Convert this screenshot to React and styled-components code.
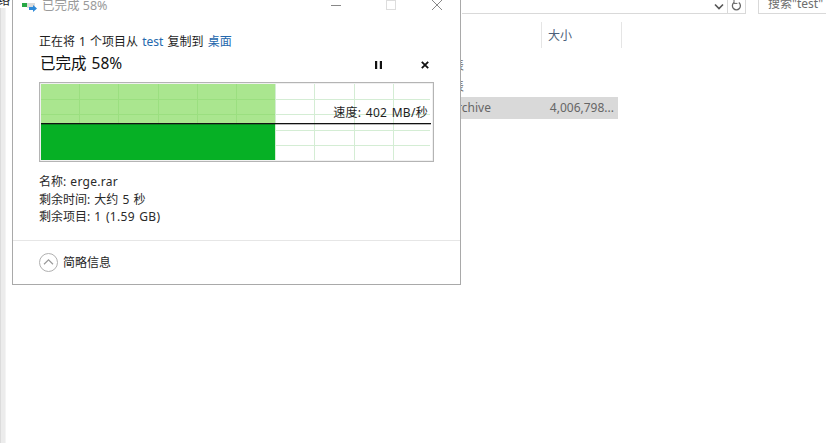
import React from "react";
import styled, { createGlobalStyle } from "styled-components";

const Global = createGlobalStyle`
  html, body { margin: 0; padding: 0; background: #fff; width: 826px; height: 443px; overflow: hidden; }
  body { font-family: "Noto Sans", "Noto Sans CJK SC", sans-serif; font-size: 12px; color: #1e1e1e; word-spacing: 1px; }
`;

const Page = styled.div`
  position: relative;
  width: 826px;
  height: 443px;
  overflow: hidden;
  display: flex;
  background: #fff;
`;

const Nav = styled.nav`
  width: 4px;
  flex: none;
  background: #ececec;
  border-left: 1px solid #dcdcdc;
  border-right: 1px solid #f4f4f4;
`;

const NavLabel = styled.div`
  position: absolute;
  left: -14px;
  top: -6px;
  width: 26px;
  font-size: 12px;
  line-height: 14px;
  background: #fff;
  color: #222;
  white-space: nowrap;
  overflow: hidden;
`;

const Explorer = styled.main`
  flex: 1;
  display: flex;
  flex-direction: column;
`;

const TopBar = styled.div`
  height: 14px;
  flex: none;
  display: flex;
  align-items: flex-end;
  padding-left: 456px;
`;

const Address = styled.div`
  width: 283px;
  height: 14px;
  border-bottom: 1px solid #d9d9d9;
  border-right: 1px solid #d9d9d9;
  display: flex;
  justify-content: flex-end;
  align-items: center;
`;

const AddrBtn = styled.div`
  width: ${(p) => p.$w}px;
  height: 14px;
  display: flex;
  align-items: center;
  justify-content: center;
  border-left: ${(p) => (p.$divider ? "1px solid #d9d9d9" : "none")};
  color: #555;
`;

const Search = styled.div`
  width: 69px;
  margin-left: 12px;
  height: 14px;
  border-left: 1px solid #d9d9d9;
  border-bottom: 1px solid #d9d9d9;
  padding-left: 9px;
  line-height: 10px;
  color: #6d6d6d;
  white-space: nowrap;
  overflow: hidden;
`;

const Columns = styled.div`
  margin-top: 8px;
  height: 26px;
  display: flex;
  padding-left: 535px;
`;

const ColHead = styled.div`
  width: 81px;
  height: 26px;
  border-left: 1px solid #e5e5e5;
  border-right: 1px solid #e5e5e5;
  box-sizing: border-box;
  padding-left: 6px;
  line-height: 28px;
  color: #4c607a;
  font-size: 12px;
  flex: none;
`;

const Rows = styled.div`
  margin-top: 6px;
  display: flex;
  flex-direction: column;
`;

const Row = styled.div`
  margin-left: 396px;
  width: 216px;
  height: 21.6px;
  display: flex;
  align-items: center;
  background: ${(p) => (p.$selected ? "#d9d9d9" : "transparent")};
  color: #666;
  white-space: nowrap;
`;

const TypeCell = styled.div`
  width: 146px;
  padding-left: ${(p) => p.$indent}px;
  box-sizing: border-box;
  flex: none;
`;

const SizeCell = styled.div`
  flex: 1;
  text-align: right;
  padding-right: 4px;
`;

const Dialog = styled.section`
  position: absolute;
  left: 12px;
  top: 0;
  width: 449px;
  height: 285px;
  box-sizing: border-box;
  background: #fff;
  border: 1px solid #a9a9a9;
  border-top: none;
  display: flex;
  flex-direction: column;
`;

const TitleBar = styled.div`
  height: 12px;
  flex: none;
  display: flex;
  align-items: center;
  padding-left: 9px;
  overflow: hidden;
`;

const TitleText = styled.div`
  margin-left: 5px;
  font-size: 12.5px;
  line-height: 12px;
  color: #9a9a9a;
  white-space: nowrap;
  word-spacing: 0;
`;

const WinControls = styled.div`
  margin-left: auto;
  display: flex;
  align-items: flex-start;
  height: 12px;
  padding-right: 18px;
`;

const WinBtn = styled.div`
  width: ${(p) => p.$w}px;
  height: 12px;
  display: flex;
  justify-content: flex-end;
`;

const Body = styled.div`
  flex: 1;
  padding: 22px 26px 0;
`;

const Line = styled.div`
  font-size: 12px;
  line-height: 16px;
  white-space: nowrap;
`;

const Lnk = styled.span`
  color: #2468ad;
`;

const Lat = styled.span`
  letter-spacing: 0.3px;
`;

const Head = styled.div`
  margin-top: 1px;
  display: flex;
  align-items: center;
  height: 24px;
`;

const Percent = styled.div`
  font-size: 15.5px;
  line-height: 24px;
  margin-left: 1px;
  color: #111;
  white-space: nowrap;
`;

const Actions = styled.div`
  margin-left: auto;
  margin-top: 3px;
  display: flex;
  gap: 39px;
  padding-right: 5px;
  align-items: center;
`;

const Chart = styled.div`
  position: relative;
  margin-top: 7px;
  width: 395px;
  height: 80px;
  box-sizing: border-box;
  border: 1px solid #b4b4b4;
  background: #fff;
`;

const ChartSvg = styled.svg`
  display: block;
  position: absolute;
  left: 0;
  top: 0;
`;

const Speed = styled.div`
  position: absolute;
  right: 5px;
  top: 22px;
  font-size: 12px;
  line-height: 16px;
  color: #1e1e1e;
  white-space: nowrap;
`;

const Details = styled.div`
  margin-top: 11px;
  display: flex;
  flex-direction: column;
`;

const Detail = styled.div`
  font-size: 12px;
  line-height: 17.5px;
  color: #2a2a2a;
  white-space: nowrap;
`;

const Footer = styled.div`
  height: 43px;
  flex: none;
  border-top: 1px solid #e6e6e6;
  display: flex;
  align-items: center;
  padding-left: 26px;
  gap: 5px;
  font-size: 12px;
`;

const FooterLabel = styled.span`
  margin-top: -2px;
`;

const vLines = [39, 78, 118, 157, 196, 235, 274, 314, 353];
const hLines = [16, 31, 47, 62];

function ChartArt() {
  const w = 393, h = 78, fx = 234, top = 41;
  return (
    <ChartSvg width={w} height={h} viewBox={`0 0 ${w} ${h}`}>
      <rect x="0" y="0" width={w} height={h} fill="#fff" stroke="#e2e2e2" strokeWidth="1" />
      {vLines.map((x) => (
        <rect key={x} x={x} y="1" width="1" height={h - 2} fill="#d4edd4" />
      ))}
      {hLines.map((y) => (
        <rect key={y} x="1" y={y} width={w - 4} height="1" fill="#d4edd4" />
      ))}
      <rect x="1" y="1" width={fx} height={top - 1} fill="#aae68f" />
      {vLines.filter((x) => x < fx).map((x) => (
        <rect key={x} x={x} y="1" width="1" height={top - 1} fill="#9bdf80" />
      ))}
      {hLines.filter((y) => y < top).map((y) => (
        <rect key={y} x="1" y={y} width={fx} height="1" fill="#9bdf80" />
      ))}
      <rect x="1" y={top} width={fx} height={h - top - 1} fill="#06b025" />
      <rect x="1" y={top - 1} width={w - 3} height="1.3" fill="#111" />
    </ChartSvg>
  );
}

export default function App() {
  return (
    <Page>
      <Global />
      <Nav />
      <NavLabel>网络</NavLabel>
      <Explorer>
        <TopBar>
          <Address>
            <AddrBtn $w={17}>
              <svg width="10" height="7" viewBox="0 0 10 7"><path d="M1 1.5 5 5.5 9 1.5" fill="none" stroke="#555" strokeWidth="1.6" /></svg>
            </AddrBtn>
            <AddrBtn $w={17} $divider>
              <svg width="11" height="12" viewBox="0 0 11 12"><path d="M7.8 2.6A4 4 0 1 1 3 2.6" fill="none" stroke="#666" strokeWidth="1.3" /><path d="M3 0v3.4h3.4" fill="none" stroke="#666" strokeWidth="1" /></svg>
            </AddrBtn>
          </Address>
          <Search>搜索"test"</Search>
        </TopBar>
        <Columns>
          <ColHead>大小</ColHead>
        </Columns>
        <Rows>
          <Row><TypeCell $indent={2}>数据工作表</TypeCell></Row>
          <Row><TypeCell $indent={2}>数据工作表</TypeCell></Row>
          <Row $selected>
            <TypeCell $indent={0}>WinRAR archive</TypeCell>
            <SizeCell>4,006,798...</SizeCell>
          </Row>
        </Rows>
      </Explorer>
      <Dialog>
        <TitleBar>
          <svg width="15" height="12" viewBox="0 0 15 12">
            <rect x="5" y="3" width="8" height="5" fill="#dcdcdc" />
            <rect x="0" y="3" width="5" height="4" fill="#27a844" />
            <path d="M7 7h4V5l4 3.5L11 12v-2H7z" fill="#2f8ad8" />
          </svg>
          <TitleText>已完成 58%</TitleText>
          <WinControls>
            <WinBtn $w={10}>
              <svg width="10" height="12" viewBox="0 0 10 12"><rect x="0" y="5" width="10" height="1" fill="#888" /></svg>
            </WinBtn>
            <WinBtn $w={55}>
              <svg width="10" height="12" viewBox="0 0 10 12"><rect x="0.5" y="0.5" width="9" height="9" fill="none" stroke="#ddd" /></svg>
            </WinBtn>
            <WinBtn $w={46}>
              <svg width="10" height="12" viewBox="0 0 10 12"><path d="M0 0 10 10M10 0 0 10" fill="none" stroke="#888" strokeWidth="1" /></svg>
            </WinBtn>
          </WinControls>
        </TitleBar>
        <Body>
          <Line>正在将 1 个项目从 <Lnk>test</Lnk> 复制到 <Lnk>桌面</Lnk></Line>
          <Head>
            <Percent>已完成 58%</Percent>
            <Actions>
              <svg width="7" height="8" viewBox="0 0 7 8"><rect x="0" y="0" width="2.2" height="8" fill="#111" /><rect x="4.8" y="0" width="2.2" height="8" fill="#111" /></svg>
              <svg width="8" height="8" viewBox="0 0 8 8"><path d="M0.8 0.8 7.2 7.2M7.2 0.8 0.8 7.2" fill="none" stroke="#111" strokeWidth="1.8" /></svg>
            </Actions>
          </Head>
          <Chart>
            <ChartArt />
            <Speed><Lat>速度: 402 MB/秒</Lat></Speed>
          </Chart>
          <Details>
            <Detail>名称: <Lat>erge.rar</Lat></Detail>
            <Detail>剩余时间: 大约 5 秒</Detail>
            <Detail>剩余项目: <Lat>1 (1.59 GB)</Lat></Detail>
          </Details>
        </Body>
        <Footer>
          <svg width="19" height="19" viewBox="0 0 19 19">
            <circle cx="9.5" cy="9.5" r="9" fill="none" stroke="#b0b0b0" strokeWidth="1" />
            <path d="M5 11.2 9.5 6.8 14 11.2" fill="none" stroke="#9a9a9a" strokeWidth="1.2" />
          </svg>
          <FooterLabel>简略信息</FooterLabel>
        </Footer>
      </Dialog>
    </Page>
  );
}
